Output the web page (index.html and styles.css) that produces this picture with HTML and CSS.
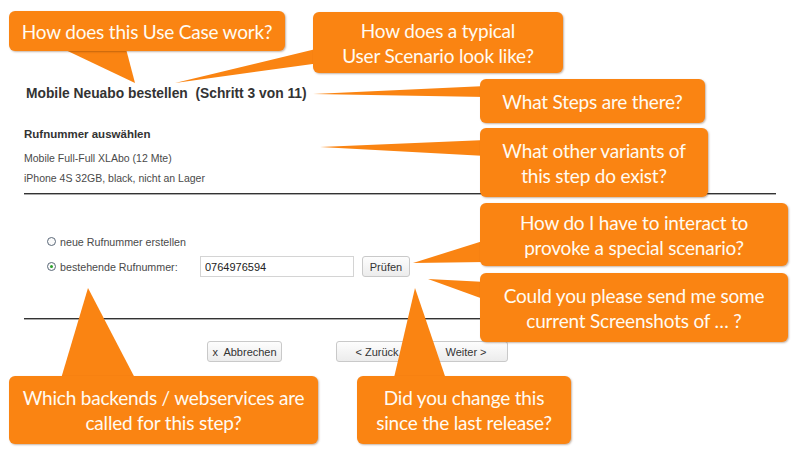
FILE: index.html
```html
<html>
  <head>
    <title>Mobile Neuabo bestellen</title>
    <link rel="stylesheet" href="styles.css">
  </head>
  <body>
    <div class="screen">
      <div class="wizard">
        <h1 class="step-title">Mobile Neuabo bestellen&nbsp; (Schritt 3 von 11)</h1>

        <h2 class="step-name">Rufnummer auswählen</h2>
        <p class="info">Mobile Full-Full XLAbo (12 Mte)</p>
        <p class="info">iPhone 4S 32GB, black, nicht an Lager</p>

        <hr class="rule">

        <form class="number-form">
          <div class="option">
            <input type="radio" name="nr" id="nrNew" class="radio">
            <label for="nrNew" class="option-label">neue Rufnummer erstellen</label>
          </div>
          <div class="option">
            <input type="radio" name="nr" id="nrOld" class="radio" checked>
            <label for="nrOld" class="option-label">bestehende Rufnummer:</label>
            <input type="text" class="field" value="0764976594">
            <button type="button" class="btn">Prüfen</button>
          </div>
        </form>

        <hr class="rule rule-bottom">

        <div class="actions">
          <button type="button" class="btn btn-cancel">x&nbsp; Abbrechen</button>
          <button type="button" class="btn btn-back">&lt; Zurück</button>
          <button type="button" class="btn btn-next">Weiter &gt;</button>
        </div>
      </div>

      <!-- speech bubble tails -->
      <svg class="tails" width="800" height="453" viewBox="0 0 800 453">
        <polygon points="55,45 125,45 135,83" />
        <polygon points="320,48 320,63 175,83" />
        <polygon points="486,86 486,97 313,94" />
        <polygon points="486,140 486,156 320,147" />
        <polygon points="486,240 486,262 413,263" />
        <polygon points="486,282 486,300 428,279" />
        <polygon points="60,382 137,382 88,288" />
        <polygon points="393,382 447,382 415,288" />
      </svg>

      <div class="note note-usecase">How does this Use Case work?</div>
      <div class="note note-scenario">How does a typical<br>User Scenario look like?</div>
      <div class="note note-steps">What Steps are there?</div>
      <div class="note note-variants">What other variants of<br>this step do exist?</div>
      <div class="note note-interact">How do I have to interact to<br>provoke a special scenario?</div>
      <div class="note note-screens">Could you please send me some<br>current Screenshots of … ?</div>
      <div class="note note-backends">Which backends / webservices are<br>called for this step?</div>
      <div class="note note-release">Did you change this<br>since the last release?</div>
    </div>
  </body>
</html>
```

FILE: styles.css
```css
:root {
  --orange: #fa8412;
  --text: #333;
  --muted: #4a4a4a;
}

* {
  box-sizing: border-box;
  margin: 0;
  padding: 0;
}

body {
  background: white;
  font-family: "Liberation Sans", Arial, sans-serif;
}

.screen {
  position: relative;
  width: 800px;
  height: 453px;
  overflow: hidden;
}

.wizard {
  padding: 0 24px;
}

.step-title {
  margin-top: 86px;
  padding-left: 2px;
  font-size: 13.8px;
  line-height: 16px;
  color: var(--text);
}

.step-name {
  margin-top: 25px;
  font-size: 11.5px;
  line-height: 14px;
  color: var(--text);
}

.info {
  font-size: 10.5px;
  line-height: 20px;
  color: var(--muted);
}

.step-name + .info {
  margin-top: 7px;
}

.rule {
  margin-top: 5px;
  border: none;
  border-top: 1px solid #333;
  border-bottom: 1px solid #aaa;
}

.rule-bottom {
  margin-top: 41px;
}

.number-form {
  margin-top: 36px;
  padding-left: 23px;
  display: flex;
  flex-direction: column;
  gap: 4px;
}

.option {
  display: flex;
  align-items: center;
  height: 21px;
}

.radio {
  appearance: none;
  width: 9px;
  height: 9px;
  margin-right: 4px;
  border: 1px solid #5a6878;
  border-radius: 50%;
  background: #fafafa;
  display: grid;
  place-items: center;
}

.radio:checked::after {
  content: "";
  width: 3px;
  height: 3px;
  border-radius: 50%;
  background: #2ca02c;
}

.option-label {
  width: 140px;
  font-size: 10.7px;
  color: var(--muted);
}

.field {
  width: 154px;
  height: 21px;
  padding: 0 4px;
  border: 1px solid #d4d4d4;
  font-family: inherit;
  font-size: 11px;
  color: #222;
}

.btn {
  height: 21px;
  padding: 0;
  white-space: nowrap;
  border: 1px solid #c9c9c9;
  border-radius: 3px;
  background: linear-gradient(#fdfdfd, #ececec);
  font-family: inherit;
  font-size: 11px;
  color: var(--text);
}

.option .btn {
  margin-left: 8px;
  width: 48px;
}

.actions {
  margin-top: 21px;
  display: flex;
}

.btn-cancel {
  margin-left: 183px;
  width: 75px;
}

.btn-back {
  margin-left: 54px;
  width: 82px;
}

.btn-next {
  margin-left: 6px;
  width: 84px;
}

/* annotations */

.tails {
  position: absolute;
  left: 0;
  top: 0;
}

.tails polygon {
  fill: var(--orange);
}

.note {
  position: absolute;
  display: flex;
  align-items: center;
  justify-content: center;
  text-align: center;
  background: var(--orange);
  border-radius: 6px;
  box-shadow: 1px 1px 2px rgba(90, 40, 0, 0.35);
  color: #fffbf2;
  font-family: Lato, "Open Sans", sans-serif;
  font-size: 19px;
  line-height: 25px;
  letter-spacing: -0.2px;
}

.note-usecase { left: 9px; top: 11px; width: 276px; height: 40px; }
.note-scenario { left: 313px; top: 12px; width: 250px; height: 61px; }
.note-steps { left: 480px; top: 79px; width: 225px; height: 44px; }
.note-variants { left: 480px; top: 128px; width: 228px; height: 69px; }
.note-interact { left: 480px; top: 203px; width: 308px; height: 63px; }
.note-screens { left: 480px; top: 273px; width: 308px; height: 69px; }
.note-backends { left: 9px; top: 376px; width: 309px; height: 68px; }
.note-release { left: 357px; top: 376px; width: 214px; height: 68px; }
```
